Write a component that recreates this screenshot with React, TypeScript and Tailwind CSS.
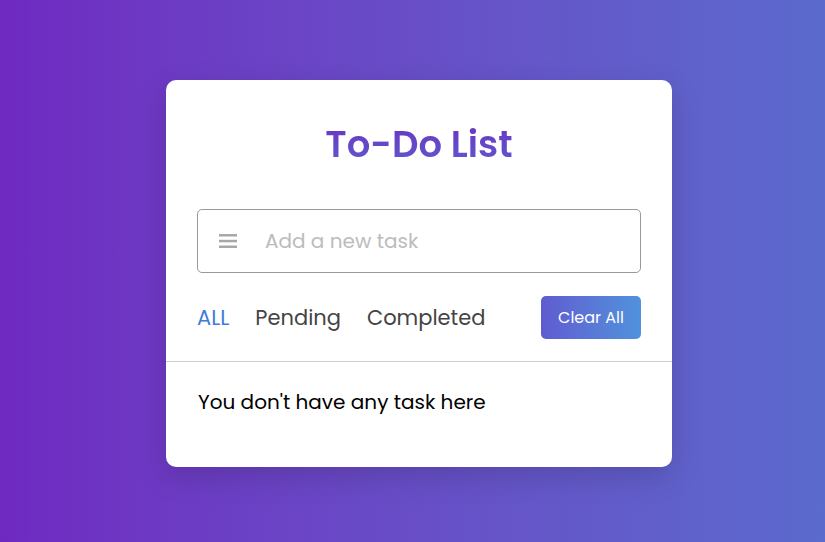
export default function App() {
  return (
    <div className="flex h-[542px] w-full items-center justify-center bg-gradient-to-r from-[#6f29c1] to-[#5b6acd] font-['Poppins','Open_Sans',sans-serif]">
      <div className="ml-[13px] mt-[5px] w-[506px] rounded-[10px] bg-white pb-[51px] pt-[36px] shadow-[0_10px_30px_rgba(0,0,0,0.15)]">
        <h1 className="bg-gradient-to-b from-[#6a2bc0] to-[#5c5ed0] bg-clip-text text-center text-[37px] font-semibold leading-[56px] text-transparent">
          To-Do List
        </h1>
        <div className="px-[31px]">
          <div className="mt-[37px] flex h-[64px] items-center rounded-[5px] border border-[#999]">
            <svg className="ml-[21px] h-[16px] w-[18px] shrink-0" viewBox="0 0 18 16">
              <rect x="0" y="1" width="18" height="2.5" fill="#a8a8a8" />
              <rect x="0" y="6.8" width="18" height="2.5" fill="#a8a8a8" />
              <rect x="0" y="12.5" width="18" height="2.5" fill="#a8a8a8" />
            </svg>
            <input
              className="ml-[28px] min-w-0 flex-1 bg-transparent text-[20px] text-[#333] outline-none placeholder:text-[#bcbcbc]"
              placeholder="Add a new task"
            />
          </div>
          <div className="mt-[23px] flex items-center justify-between">
            <div className="flex gap-[26px] text-[21px] leading-[43px]">
              <span className="text-[#3f7dd6]">ALL</span>
              <span className="text-[#444]">Pending</span>
              <span className="text-[#444]">Completed</span>
            </div>
            <button className="h-[43px] w-[100px] rounded-[5px] bg-gradient-to-r from-[#5f5bd0] to-[#4f92dc] text-[16px] text-white">
              Clear All
            </button>
          </div>
        </div>
        <div className="mt-[22px] border-t border-[#ccc]" />
        <p className="px-[32px] pt-[26px] text-[20px] leading-[28px] text-black">
          You don't have any task here
        </p>
      </div>
    </div>
  )
}
